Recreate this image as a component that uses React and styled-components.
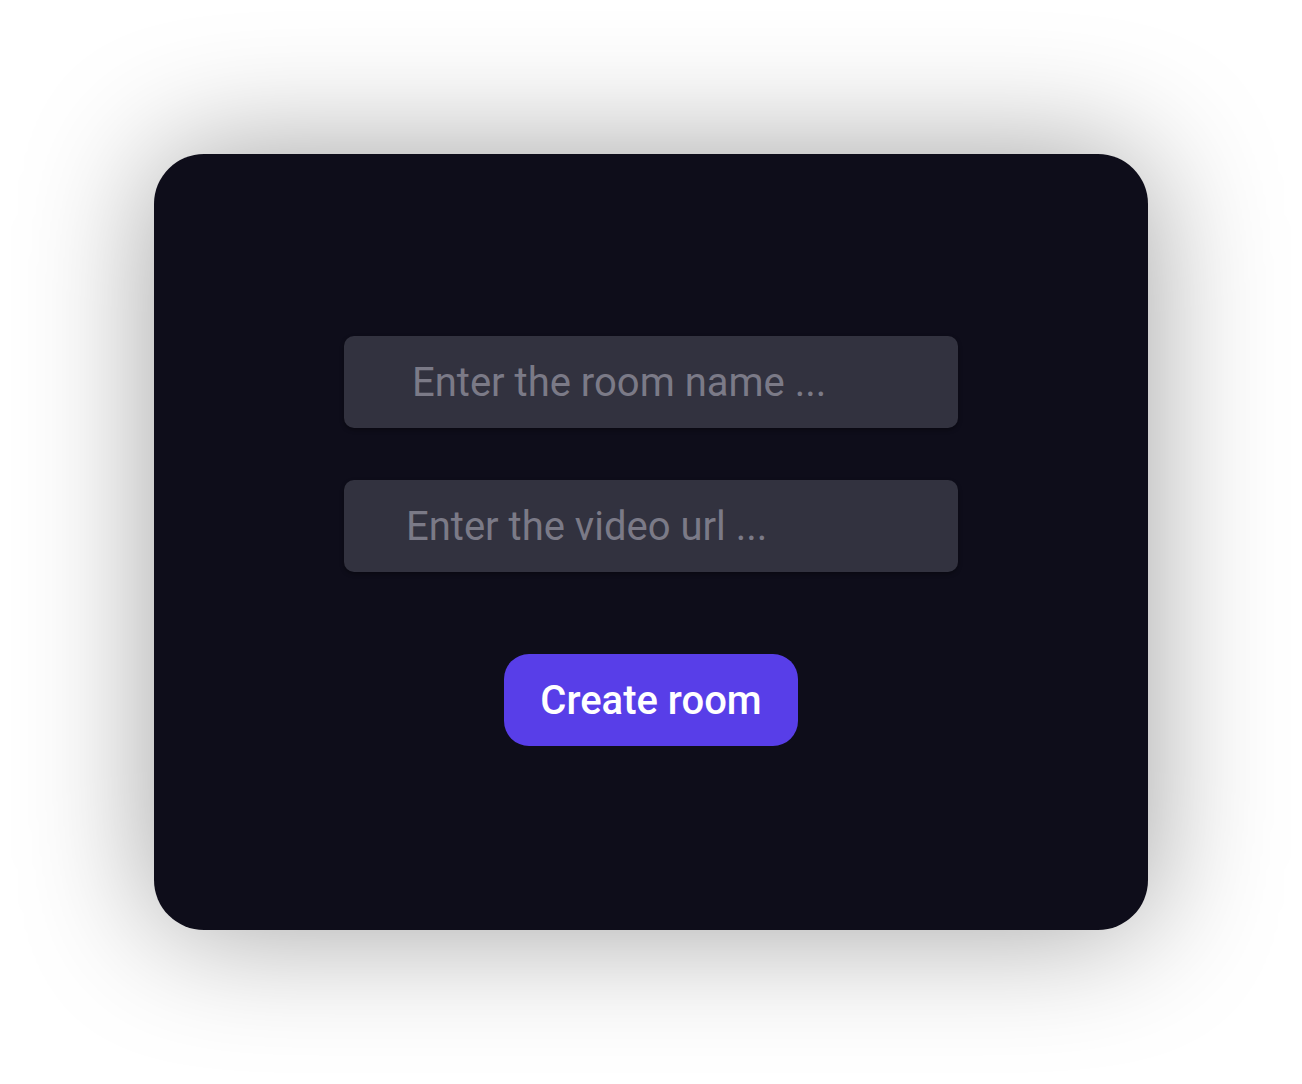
import React from "react";
import styled, { createGlobalStyle } from "styled-components";

const GlobalStyle = createGlobalStyle`
  html, body {
    margin: 0;
    padding: 0;
    background: #ffffff;
    font-family: Roboto, "Liberation Sans", sans-serif;
  }
`;

function App() {
  return (
    <Page>
      <GlobalStyle />
      <Card>
        <Form>
          <Field indent={68} placeholder="Enter the room name ..." />
          <Field indent={62} placeholder="Enter the video url ..." />
          <CreateBtn type="button">Create room</CreateBtn>
        </Form>
      </Card>
    </Page>
  );
}
export default App;

const Page = styled.div`
  min-height: 100vh;
  display: flex;
  align-items: center;
  justify-content: center;
`;

const Card = styled.div`
  width: 994px;
  height: 776px;
  box-sizing: border-box;
  background-color: #0e0d1a;
  border-radius: 50px;
  box-shadow: 0 0 130px rgba(0, 0, 0, 0.38);
  display: flex;
  align-items: center;
  justify-content: center;
`;

const Form = styled.div`
  display: flex;
  flex-direction: column;
  align-items: center;
  margin-top: -2px;
`;

const Field = styled.input`
  width: 614px;
  height: 92px;
  box-sizing: border-box;
  margin-bottom: 52px;
  padding: 0 20px 0 ${(props) => props.indent}px;
  border: none;
  outline: none;
  border-radius: 10px;
  background-color: #32323f;
  box-shadow: 0 2px 4px rgba(0, 0, 0, 0.35);
  color: #d0d0d8;
  font-family: Roboto, "Liberation Sans", sans-serif;
  font-size: 40px;
  &::placeholder {
    color: #7b7a87;
  }
`;

const CreateBtn = styled.button`
  margin-top: 30px;
  width: 294px;
  height: 92px;
  border: none;
  border-radius: 25px;
  background-color: #583ee8;
  color: #ffffff;
  font-family: Roboto, "Liberation Sans", sans-serif;
  font-weight: 500;
  font-size: 40px;
  cursor: pointer;
`;
